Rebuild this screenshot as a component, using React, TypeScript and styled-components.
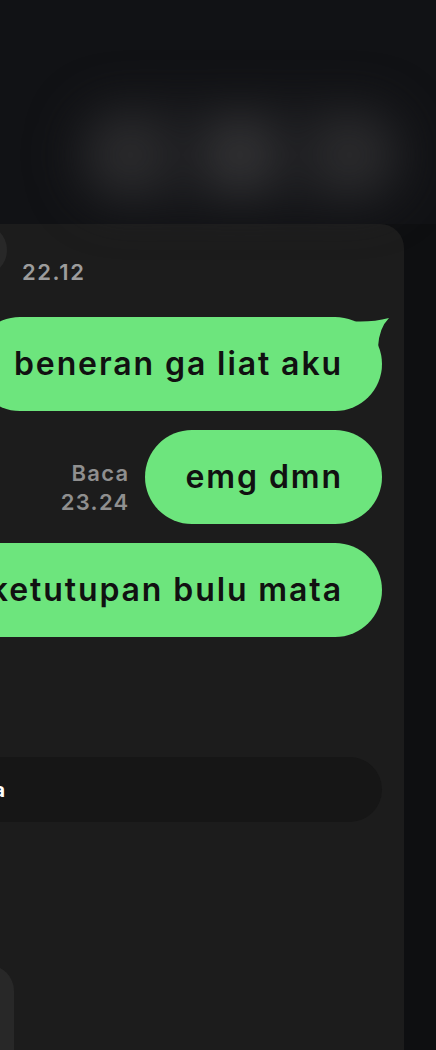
import * as React from 'react';
import styled, { createGlobalStyle } from 'styled-components';

const GlobalStyle = createGlobalStyle`
  html, body {
    margin: 0;
    padding: 0;
    background: #0e0f11;
  }
  body {
    font-family: Inter, "Noto Sans", "Liberation Sans", sans-serif;
    -webkit-font-smoothing: antialiased;
  }
`;

const GREEN = '#6de57d';

const Screen = styled.div`
  width: 436px;
  height: 1050px;
  overflow: hidden;
  background: #0e0f11;
  display: flex;
  flex-direction: column;
`;

const Header = styled.header`
  height: 224px;
  flex-shrink: 0;
  background: #111215;
  padding: 100px 0 0 70px;
  box-sizing: border-box;
`;

const Haze = styled.div`
  width: 340px;
  height: 110px;
  border-radius: 50px;
  background: rgba(34, 34, 36, 0.6);
  filter: blur(22px);
  display: flex;
  align-items: center;
  justify-content: space-between;
  padding: 0 20px;
  box-sizing: border-box;
`;

const Blob = styled.div<{ $tone: string }>`
  width: 80px;
  height: 80px;
  border-radius: 50%;
  background: ${(p) => p.$tone};
`;

const Panel = styled.main`
  flex: 1;
  margin-left: -60px;
  width: 464px;
  box-sizing: border-box;
  background: #1c1c1c;
  border-top-right-radius: 24px;
  padding: 0 22px 0 0;
  display: flex;
  flex-direction: column;
`;

const IncomingRow = styled.div<{ $top?: number }>`
  display: flex;
  align-items: flex-end;
  gap: 15px;
  margin-top: ${(p) => p.$top ?? 0}px;
`;

const GreyBubble = styled.div<{ $w: number; $h: number }>`
  width: ${(p) => p.$w}px;
  height: ${(p) => p.$h}px;
  flex-shrink: 0;
  background: #282828;
  border-radius: 0 26px 26px 0;
`;

const Time = styled.span`
  font-size: 22px;
  font-weight: 600;
  line-height: 1;
  color: #9c9c9c;
  margin-bottom: -7px;
  letter-spacing: 1.6px;
`;

const Thread = styled.div`
  margin-top: 41px;
  display: flex;
  flex-direction: column;
  gap: 19px;
`;

const OutRow = styled.div`
  display: flex;
  justify-content: flex-end;
  align-items: flex-end;
  gap: 15px;
`;

const Meta = styled.div`
  display: flex;
  flex-direction: column;
  align-items: flex-end;
  font-size: 22px;
  font-weight: 600;
  line-height: 29px;
  color: #8f8f8f;
  margin-bottom: 7px;
  letter-spacing: 1.3px;
`;

const Bubble = styled.div`
  position: relative;
  flex-shrink: 0;
  height: 94px;
  padding: 0 39px 0 41px;
  border-radius: 47px;
  background: ${GREEN};
  color: #111111;
  font-size: 32px;
  font-weight: 600;
  line-height: 94px;
  letter-spacing: 1.9px;
  white-space: nowrap;
`;

const Tail = styled.svg`
  position: absolute;
  top: -2px;
  right: -10px;
  width: 52px;
  height: 40px;
`;

const Composer = styled.div`
  margin: 120px 0 0 0;
  height: 65px;
  border-radius: 33px;
  background: #161616;
  display: grid;
  grid-template-columns: 65px 1fr;
  align-items: center;
`;

const ComposerText = styled.span`
  text-align: right;
  white-space: nowrap;
  direction: rtl;
  overflow: visible;
  font-size: 20px;
  font-weight: 700;
  color: #ffffff;
`;

export default function App() {
  return (
    <>
      <GlobalStyle />
      <Screen>
        <Header>
          <Haze>
            <Blob $tone="#2a2a2c" />
            <Blob $tone="#303032" />
            <Blob $tone="#2a2a2c" />
          </Haze>
        </Header>
        <Panel>
          <IncomingRow>
            <GreyBubble $w={67} $h={52} />
            <Time>22.12</Time>
          </IncomingRow>
          <Thread>
            <OutRow>
              <Bubble>
                beneran ga liat aku
                <Tail viewBox="0 0 52 40">
                  <path d="M8 6 Q30 8 49 3 Q39 13 38 32 L8 32 Z" fill={GREEN} />
                </Tail>
              </Bubble>
            </OutRow>
            <OutRow>
              <Meta>
                <span>Baca</span>
                <span>23.24</span>
              </Meta>
              <Bubble>emg dmn</Bubble>
            </OutRow>
            <OutRow>
              <Bubble>ketutupan bulu mata</Bubble>
            </OutRow>
          </Thread>
          <Composer>
            <ComposerText>a</ComposerText>
          </Composer>
          <IncomingRow $top={143}>
            <GreyBubble $w={74} $h={120} />
          </IncomingRow>
        </Panel>
      </Screen>
    </>
  );
}
